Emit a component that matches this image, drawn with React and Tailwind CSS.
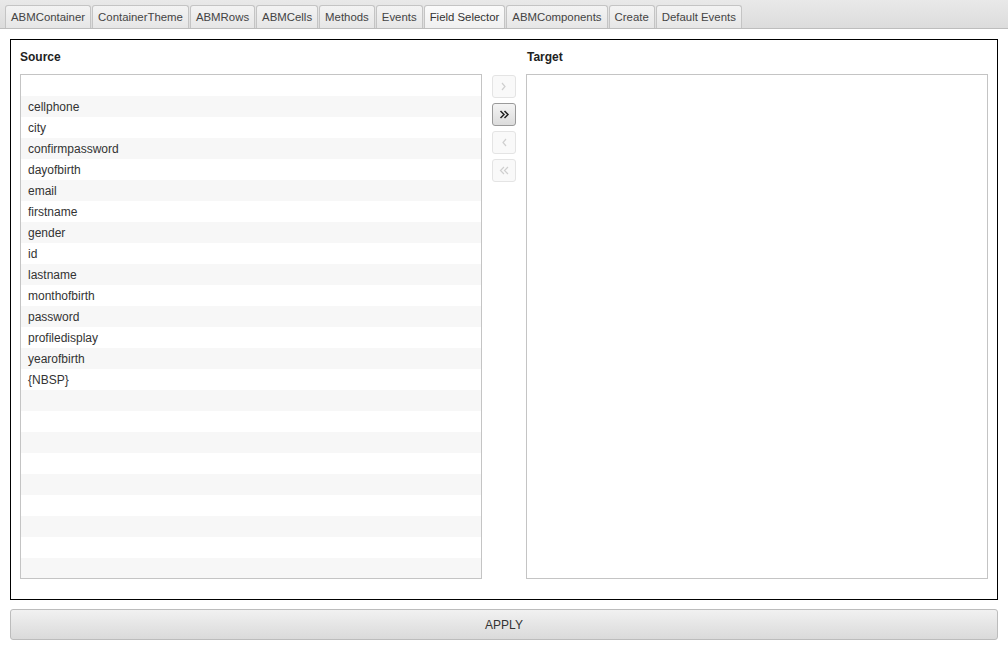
import React from 'react';

const tabs = [
  'ABMContainer',
  'ContainerTheme',
  'ABMRows',
  'ABMCells',
  'Methods',
  'Events',
  'Field Selector',
  'ABMComponents',
  'Create',
  'Default Events',
];

const fields = [
  '',
  'cellphone',
  'city',
  'confirmpassword',
  'dayofbirth',
  'email',
  'firstname',
  'gender',
  'id',
  'lastname',
  'monthofbirth',
  'password',
  'profiledisplay',
  'yearofbirth',
  '{NBSP}',
];

const rows = Array.from({ length: 24 }, (_, i) => fields[i] ?? '');

const paths = {
  right: 'M5 4 L8 7.5 L5 11',
  all: 'M3.5 4 L7 7.5 L3.5 11 M7.5 4 L11 7.5 L7.5 11',
  left: 'M9 4 L6 7.5 L9 11',
  none: 'M7 4 L3.5 7.5 L7 11 M11 4 L7.5 7.5 L11 11',
};

const MoveButton = ({ icon, enabled }) => (
  <button
    className={`w-[24px] h-[23px] rounded-[3px] border flex items-center justify-center ${
      enabled
        ? 'border-[#9a9a9a] bg-gradient-to-b from-[#f4f4f4] to-[#dcdcdc] text-[#222]'
        : 'border-[#e4e4e4] bg-[#f9f9f9] text-[#cfcfcf]'
    }`}
  >
    <svg width="14" height="15" viewBox="0 0 14 15" fill="none" stroke="currentColor" strokeWidth={enabled ? 1.5 : 1.2}>
      <path d={paths[icon]} />
    </svg>
  </button>
);

export default function App() {
  return (
    <div className="w-[1008px] h-[649px] bg-white text-[12px] text-[#333] font-['Liberation_Sans',Arial,sans-serif]">
      {/* Tabs */}
      <div className="h-[29px] flex items-end pl-[5px] gap-[1px] bg-gradient-to-b from-[#e9e9e9] to-[#dcdcdc] border-b border-[#bdbdbd]">
        {tabs.map((t) => (
          <div
            key={t}
            className={`h-[23px] px-[5px] pt-[2px] flex items-center rounded-t-[3px] border border-b-0 border-[#c4c4c4] whitespace-nowrap text-[11.4px] ${
              t === 'Field Selector'
                ? 'bg-gradient-to-b from-[#fbfbfb] to-[#f0f0f0] text-[#333]'
                : 'bg-gradient-to-b from-[#f3f3f3] to-[#e6e6e6] text-[#444]'
            }`}
          >
            {t}
          </div>
        ))}
      </div>

      <div className="px-[10px] pt-[10px]">
        {/* Panel */}
        <div className="border border-black h-[561px] px-[9px] pt-[9px] flex gap-[10px]">
          <div className="w-[462px] flex flex-col">
            <div className="h-[16px] leading-[16px] mb-[9px] font-bold text-[#222]">Source</div>
            <div className="h-[505px] border border-[#c4c4c4] overflow-hidden">
              {rows.map((r, i) => (
                <div
                  key={i}
                  className={`h-[21px] leading-[23px] pl-[7px] overflow-hidden ${i % 2 === 1 ? 'bg-[#f7f7f7]' : 'bg-white'}`}
                >
                  {r}
                </div>
              ))}
            </div>
          </div>

          <div className="w-[24px] pt-[26px] flex flex-col gap-[5px]">
            <MoveButton icon="right" enabled={false} />
            <MoveButton icon="all" enabled />
            <MoveButton icon="left" enabled={false} />
            <MoveButton icon="none" enabled={false} />
          </div>

          <div className="w-[462px] flex flex-col">
            <div className="h-[16px] leading-[16px] mb-[9px] pl-[1px] font-bold text-[#222]">Target</div>
            <div className="h-[505px] border border-[#c4c4c4] bg-white" />
          </div>
        </div>

        {/* Apply */}
        <button className="mt-[9px] w-full h-[31px] rounded-[3px] border border-[#bcbcbc] bg-gradient-to-b from-[#f1f1f1] to-[#dadada] text-[#333] text-[12px]">
          APPLY
        </button>
      </div>
    </div>
  );
}
